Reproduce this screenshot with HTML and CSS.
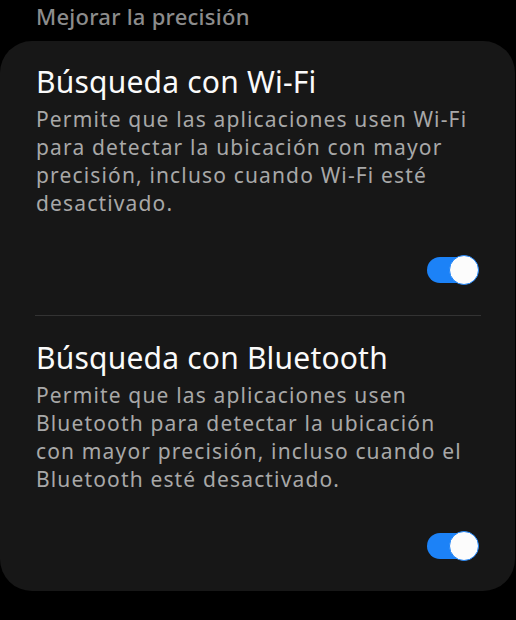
FILE: index.html
```html
<!DOCTYPE html>
<html lang="es">
<head>
  <meta charset="UTF-8" />
  <title>Mejorar la precisión</title>
  <link rel="stylesheet" href="styles.css">
</head>
<body>
  <h2 class="section-title">Mejorar la precisión</h2>

  <div class="card">
    <div class="item">
      <h3>Búsqueda con Wi-Fi</h3>
      <p>Permite que las aplicaciones usen Wi-Fi para detectar la ubicación con mayor precisión, incluso cuando Wi-Fi esté desactivado.</p>
      <div class="switch-row"><span class="switch on"></span></div>
    </div>

    <div class="divider"></div>

    <div class="item">
      <h3>Búsqueda con Bluetooth</h3>
      <p>Permite que las aplicaciones usen Bluetooth para detectar la ubicación con mayor precisión, incluso cuando el Bluetooth esté desactivado.</p>
      <div class="switch-row"><span class="switch on"></span></div>
    </div>
  </div>
</body>
</html>
```

FILE: styles.css
```css
body {
  margin: 0;
  background: #000;
  font-family: "Noto Sans", "Open Sans", sans-serif;
  width: 516px;
  height: 620px;
  overflow: hidden;
}

.section-title {
  margin: 0;
  padding: 3px 0 0 36px;
  height: 41px;
  box-sizing: border-box;
  font-size: 22px;
  font-weight: 500;
  letter-spacing: 0.25px;
  color: #8c8c8c;
  line-height: 26px;
}

.card {
  margin: 0 1px 0 0;
  background: #171717;
  border-radius: 32px;
  padding: 22px 0 0;
}

.item {
  padding: 0 34px 0 36px;
}

.item h3 {
  margin: 0;
  font-size: 30px;
  font-weight: 400;
  letter-spacing: 0.2px;
  color: #fafafa;
  line-height: 38px;
}

.item p {
  margin: 4px 0 0;
  font-size: 21px;
  letter-spacing: 1.15px;
  line-height: 28px;
  color: #a8a8a8;
}

.switch-row {
  display: flex;
  justify-content: flex-end;
  padding: 40px 10px 32px 0;
}

.switch {
  position: relative;
  display: block;
  width: 44px;
  height: 26px;
  border-radius: 13px;
  background: #1c82f7;
}

.switch.on::after {
  content: "";
  position: absolute;
  right: -8px;
  top: -2px;
  width: 28px;
  height: 28px;
  border-radius: 50%;
  background: #fcfcfc;
  border: 1px solid #1c82f7;
}

.divider {
  height: 1px;
  background: #333;
  margin: 0 34px 23px 35px;
}
```
